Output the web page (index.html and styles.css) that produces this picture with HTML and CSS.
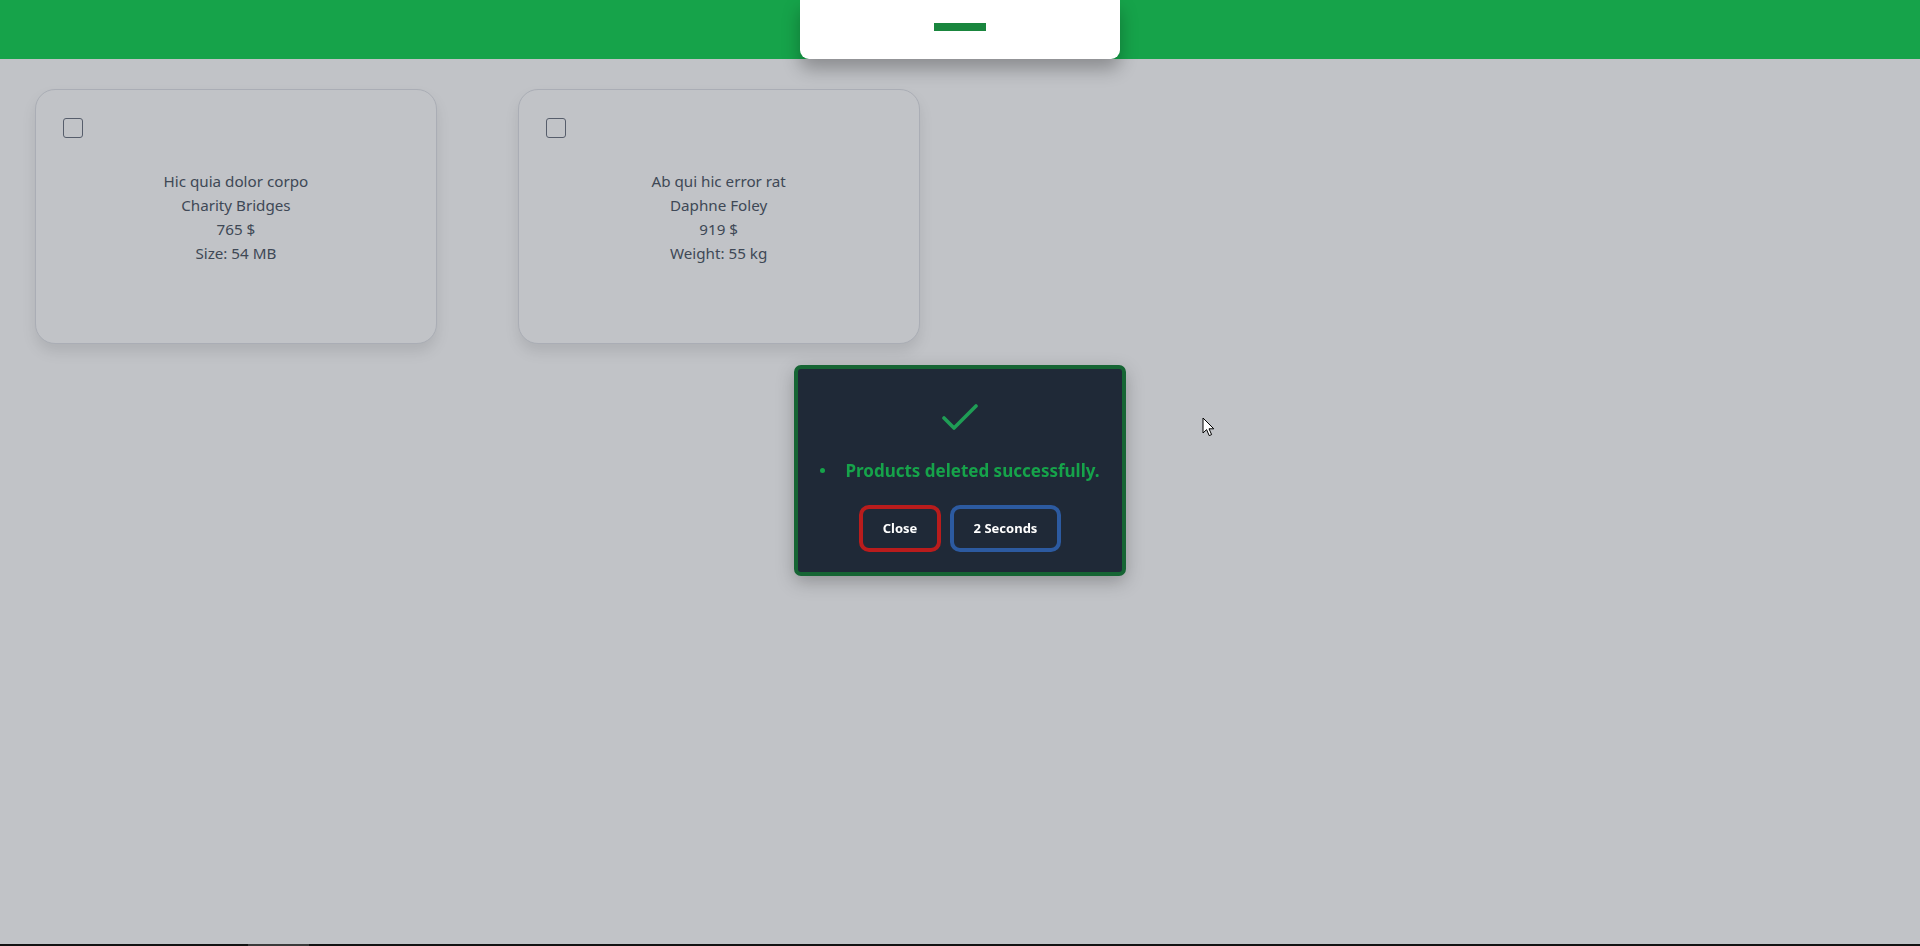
FILE: index.html
```html
<!DOCTYPE html>
<html lang="en">
<head>
<meta charset="utf-8">
<title>Products</title>
<link rel="stylesheet" href="styles.css">
</head>
<body>
<header class="topbar">
  <div class="tab"><span class="tab-bar"></span></div>
</header>

<main class="grid">
  <article class="card">
    <input class="check" type="checkbox">
    <div class="info">
      <p>Hic quia dolor corpo</p>
      <p>Charity Bridges</p>
      <p>765 $</p>
      <p>Size: 54 MB</p>
    </div>
  </article>
  <article class="card">
    <input class="check" type="checkbox">
    <div class="info">
      <p>Ab qui hic error rat</p>
      <p>Daphne Foley</p>
      <p>919 $</p>
      <p>Weight: 55 kg</p>
    </div>
  </article>
</main>

<div class="overlay">
  <div class="modal">
    <svg class="tick" width="36" height="27" viewBox="0 0 36 27"><polyline points="2,14 12,24 34,2" fill="none" stroke="#1f9d55" stroke-width="3.6" stroke-linecap="round" stroke-linejoin="round"/></svg>
    <ul class="msg"><li>Products deleted successfully.</li></ul>
    <div class="actions">
      <button class="btn btn-close">Close</button>
      <button class="btn btn-timer">2 Seconds</button>
    </div>
  </div>
</div>

<svg class="cursor" width="14" height="21" viewBox="0 0 14 21"><path d="M1 1 L1 16 L4.6 12.6 L7.2 18.6 L9.6 17.6 L7 11.8 L11.8 11.8 Z" fill="#fff" stroke="#000" stroke-width="1" stroke-linejoin="miter"/></svg>

<div class="taskstrip"><span class="taskstrip-item"></span></div>
</body>
</html>
```
FILE: styles.css
```css
* { box-sizing: border-box; }
html, body { margin: 0; padding: 0; }
body {
  background: #ffffff;
  font-family: "Noto Sans", "Open Sans", sans-serif;
  height: 946px;
  overflow: hidden;
}
.topbar {
  position: relative;
  z-index: 20;
  height: 59px;
  background: #16a34a;
  display: flex;
  justify-content: center;
}
.tab {
  width: 320px;
  height: 59px;
  background: #ffffff;
  border-radius: 0 0 9px 9px;
  box-shadow: 0 10px 18px rgba(0, 0, 0, 0.28);
  display: flex;
  justify-content: center;
  padding-top: 23px;
}
.tab-bar {
  width: 52px;
  height: 8px;
  background: #1a863e;
}
.grid {
  display: grid;
  grid-template-columns: repeat(4, 1fr);
  column-gap: 81px;
  padding: 30px 35px 0;
}
.card {
  height: 255px;
  background: #ffffff;
  border: 1px solid #dfe1e6;
  border-radius: 20px;
  box-shadow: 0 8px 14px rgba(0, 0, 0, 0.10);
  padding: 28px 27px;
  display: flex;
  flex-direction: column;
}
.check {
  appearance: none;
  -webkit-appearance: none;
  margin: 0;
  width: 20px;
  height: 20px;
  border: 1.5px solid #6b7280;
  border-radius: 3px;
  background: #fff;
}
.info {
  margin-top: 31px;
  text-align: center;
  color: #4b5563;
  font-size: 15.2px;
  line-height: 24px;
}
.info p { margin: 0; }
.overlay {
  position: fixed;
  inset: 0;
  z-index: 10;
  background: rgba(31, 41, 55, 0.28);
  display: flex;
  align-items: center;
  justify-content: center;
  padding-bottom: 6px;
}
.modal {
  width: 332px;
  background: #1f2937;
  border: 4px solid #166534;
  border-radius: 7px;
  box-shadow: 0 6px 18px rgba(0, 0, 0, 0.25);
  padding: 35px 10px 20px;
  display: flex;
  flex-direction: column;
  align-items: center;
}
.tick { display: block; }
.msg {
  list-style: none;
  margin: 28px 0 0;
  padding: 0;
  color: #16a34a;
  font-weight: 700;
  font-size: 17px;
  line-height: 24px;
  white-space: nowrap;
}
.msg li {
  display: flex;
  align-items: center;
}
.msg li::before {
  content: "";
  width: 5px;
  height: 5px;
  border-radius: 50%;
  background: #16a34a;
  margin-right: 20px;
}
.actions {
  margin-top: 22px;
  display: flex;
  gap: 9px;
}
.btn {
  height: 47px;
  padding: 0;
  background: #1f2937;
  color: #ffffff;
  font-family: "Noto Sans", "Open Sans", sans-serif;
  font-weight: 700;
  font-size: 13px;
  white-space: nowrap;
  border-radius: 10px;
  border: 4px solid;
}
.btn-close { width: 82px; border-color: #b91c1c; }
.btn-timer { width: 111px; border-color: #2c5aa0; }
.cursor {
  position: fixed;
  left: 1202px;
  top: 417px;
  z-index: 30;
}
.taskstrip {
  position: fixed;
  left: 0;
  right: 0;
  bottom: 0;
  height: 2px;
  background: #121212;
  z-index: 40;
}
.taskstrip-item {
  position: absolute;
  left: 248px;
  width: 61px;
  top: 0;
  bottom: 0;
  background: #3a3a3a;
}
```
